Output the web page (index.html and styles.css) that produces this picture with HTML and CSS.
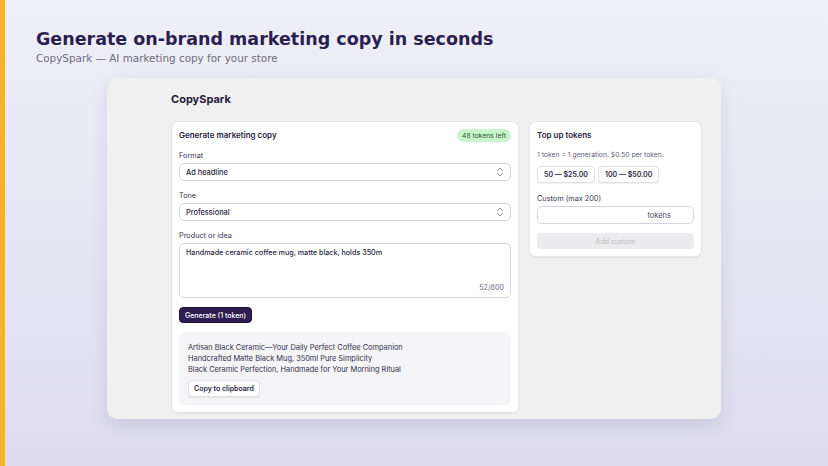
FILE: index.html
```
<!DOCTYPE html>
<html lang="en">
  <head>
    <meta charset="UTF-8" />
    <title>CopySpark</title>
    <meta name="viewport" content="width=device-width, initial-scale=1.0" />
    <link rel="stylesheet" href="styles.css">
  </head>
  <body>
    <div class="page">
      <!-- HEADER -->
      <header class="hero">
        <h1>Generate on-brand marketing copy in seconds</h1>
        <p>CopySpark — AI marketing copy for your store</p>
      </header>

      <!-- APP PANEL -->
      <div class="panel">
        <h2 class="brand">CopySpark</h2>
        <div class="columns">
          <div class="card main-card">
            <div class="card-head">
              <h3>Generate marketing copy</h3>
              <span class="badge">48 tokens left</span>
            </div>

            <label>Format</label>
            <div class="select">
              <span>Ad headline</span>
              <svg width="8" height="10" viewBox="0 0 8 10"><path d="M1.5 3.5 4 1l2.5 2.5M1.5 6.5 4 9l2.5-2.5" fill="none" stroke="#8a8796" stroke-width="1" stroke-linecap="round" stroke-linejoin="round"/></svg>
            </div>

            <label>Tone</label>
            <div class="select">
              <span>Professional</span>
              <svg width="8" height="10" viewBox="0 0 8 10"><path d="M1.5 3.5 4 1l2.5 2.5M1.5 6.5 4 9l2.5-2.5" fill="none" stroke="#8a8796" stroke-width="1" stroke-linecap="round" stroke-linejoin="round"/></svg>
            </div>

            <label>Product or idea</label>
            <div class="textarea">
              <span>Handmade ceramic coffee mug, matte black, holds 350m</span>
              <span class="count">52/800</span>
            </div>

            <button class="btn-primary">Generate (1 token)</button>

            <div class="output">
              <p>Artisan Black Ceramic—Your Daily Perfect Coffee Companion</p>
              <p>Handcrafted Matte Black Mug, 350ml Pure Simplicity</p>
              <p>Black Ceramic Perfection, Handmade for Your Morning Ritual</p>
              <button class="btn-light copy-btn">Copy to clipboard</button>
            </div>
          </div>

          <div class="card side-card">
            <h3>Top up tokens</h3>
            <p class="note">1 token = 1 generation. $0.50 per token.</p>
            <div class="packs">
              <button class="btn-light">50 — $25.00</button>
              <button class="btn-light">100 — $50.00</button>
            </div>
            <label>Custom (max 200)</label>
            <div class="token-input">
              <input type="text" />
              <span>tokens</span>
            </div>
            <button class="btn-disabled" disabled>Add custom</button>
          </div>
        </div>
      </div>
    </div>
  </body>
</html>
```

FILE: styles.css
```
* {
  box-sizing: border-box;
}

html,
body {
  height: 100%;
}

body {
  margin: 0;
  font-family: "Inter", "Liberation Sans", sans-serif;
  background: linear-gradient(180deg, #efeff9 0%, #dedcee 100%);
  color: #2a2540;
}

.page {
  min-height: 100%;
  border-left: 5px solid #f6b324;
  padding: 27px 0 0 31px;
}

.hero h1 {
  font-family: "DejaVu Sans", sans-serif;
  font-size: 17.5px;
  line-height: 24px;
  font-weight: 700;
  color: #2b1f4f;
  margin: 0;
}

.hero p {
  font-family: "DejaVu Sans", sans-serif;
  font-size: 10.4px;
  line-height: 14px;
  color: #6d6b7c;
  margin: 0;
}

.panel {
  width: 614px;
  height: 341px;
  margin: 13px 0 0 71px;
  background: #f0f0f0;
  border-radius: 10px;
  box-shadow: 0 6px 18px rgba(60, 50, 110, 0.12);
  padding: 13px 19px 7px 64px;
}

.brand {
  font-size: 11px;
  line-height: 16px;
  font-weight: 700;
  color: #251b40;
  margin: 0 0 14px;
}

.columns {
  display: grid;
  grid-template-columns: 348px 173px;
  gap: 10px;
  align-items: start;
}

.card {
  background: #fff;
  border-radius: 7px;
  border: 1px solid #e6e6e8;
  box-shadow: 0 1px 2px rgba(0, 0, 0, 0.06);
  padding: 6px 7px 7px;
}

.card-head {
  display: flex;
  justify-content: space-between;
  align-items: center;
  height: 14px;
  margin-bottom: 8px;
}

h3 {
  font-size: 8px;
  line-height: 14px;
  font-weight: 600;
  color: #2a2540;
  margin: 0;
}

.badge {
  background: #c8f4cc;
  color: #2b5a35;
  font-size: 6.8px;
  line-height: 13px;
  padding: 0 5px;
  border-radius: 7px;
}

label {
  display: block;
  font-size: 7.3px;
  line-height: 11px;
  color: #3a3650;
  margin-bottom: 2px;
}

.select {
  display: flex;
  justify-content: space-between;
  align-items: center;
  height: 18px;
  padding: 0 6px 0 6px;
  border: 1px solid #d7d4e2;
  border-radius: 5px;
  font-size: 7.4px;
  font-weight: 500;
  color: #2a2540;
  margin-bottom: 9px;
}

.textarea {
  height: 55px;
  border: 1px solid #d7d4e2;
  border-radius: 5px;
  padding: 4px 6px;
  font-size: 7.2px;
  font-weight: 500;
  line-height: 10px;
  color: #2a2540;
  display: flex;
  flex-direction: column;
  justify-content: space-between;
  margin-bottom: 9px;
}

.count {
  align-self: flex-end;
  color: #6d6a7c;
  font-weight: 400;
}

button {
  font-family: inherit;
  cursor: pointer;
}

.btn-primary {
  display: block;
  height: 16px;
  padding: 0 5px;
  background: #2e1f52;
  color: #fff;
  border: 1px solid #1d1238;
  border-radius: 4px;
  font-size: 7px;
  font-weight: 500;
  margin-bottom: 9px;
}

.output {
  background: #f5f5f7;
  border-radius: 6px;
  padding: 9.5px 9px 8px;
}

.output p {
  font-size: 7.4px;
  line-height: 11px;
  color: #34304a;
  margin: 0;
}

.btn-light {
  height: 17px;
  padding: 0 6px;
  background: #fff;
  color: #2a2540;
  border: 1px solid #e0e0e4;
  border-radius: 4px;
  box-shadow: 0 1px 1px rgba(0, 0, 0, 0.06);
  font-size: 7px;
  font-weight: 600;
}

.copy-btn {
  margin-top: 3px;
  padding: 0 5px;
}

.note {
  font-size: 6.8px;
  line-height: 10px;
  color: #62607a;
  margin: 8px 0 6px;
}

.packs {
  display: flex;
  gap: 3px;
  margin-bottom: 10px;
}

.token-input {
  display: flex;
  align-items: center;
  height: 18px;
  border: 1px solid #d7d4e2;
  border-radius: 5px;
  padding-right: 22px;
  margin-bottom: 9px;
}

.token-input input {
  flex: 1;
  min-width: 0;
  border: none;
  background: transparent;
  outline: none;
}

.token-input span {
  font-size: 7.5px;
  color: #4a4660;
}

.btn-disabled {
  display: block;
  width: 100%;
  height: 16px;
  background: #ececee;
  color: #b8b8bd;
  border: none;
  border-radius: 4px;
  font-size: 7px;
}
```
